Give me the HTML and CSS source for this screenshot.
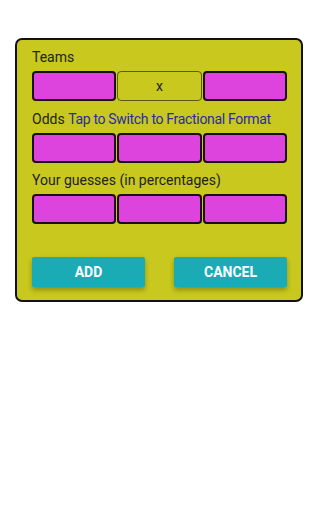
FILE: index.html
```html
<!DOCTYPE html>
<html>
<head>
<meta charset="utf-8">
<link rel="stylesheet" href="styles.css">
</head>
<body>
<div class="card">
  <div class="label">Teams</div>
  <div class="row">
    <div class="box"></div>
    <div class="box plain">x</div>
    <div class="box"></div>
  </div>
  <div class="label">Odds <span class="link">Tap to Switch to Fractional Format</span></div>
  <div class="row">
    <div class="box"></div>
    <div class="box"></div>
    <div class="box"></div>
  </div>
  <div class="label">Your guesses (in percentages)</div>
  <div class="row">
    <div class="box"></div>
    <div class="box"></div>
    <div class="box"></div>
  </div>
  <div class="actions">
    <button class="btn">ADD</button>
    <button class="btn">CANCEL</button>
  </div>
</div>
</body>
</html>
```
FILE: styles.css
```css
html, body {
  margin: 0;
  padding: 0;
  background: #ffffff;
}
body {
  font-family: Roboto, "Liberation Sans", sans-serif;
  color: #222222;
}
.card {
  box-sizing: border-box;
  width: 288px;
  margin: 38px 0 0 15px;
  border: 2px solid #111111;
  border-radius: 7px;
  background: #c8c81e;
  padding: 7px 14px 13px 15px;
}
.label {
  font-size: 14px;
  line-height: 20px;
  height: 20px;
  margin-bottom: 4px;
  white-space: nowrap;
}
.link {
  color: #2a2aa6;
  letter-spacing: -0.32px;
}
.row {
  display: grid;
  grid-template-columns: 1fr 1fr 1fr;
  gap: 1px;
  margin-bottom: 7.5px;
}
.box {
  box-sizing: border-box;
  height: 30px;
  background: #dd44dd;
  border: 2px solid #1a0d14;
  border-radius: 4px;
}
.plain {
  background: #c8c81e;
  border: 1px solid #5a5a10;
  display: flex;
  align-items: center;
  justify-content: center;
  font-size: 14px;
  color: #222;
}
.actions {
  display: flex;
  justify-content: space-between;
  margin-top: 33px;
}
.btn {
  width: 113px;
  height: 30px;
  border: none;
  border-radius: 2px;
  background: #1aabb5;
  color: #ffffff;
  font-family: Roboto, "Liberation Sans", sans-serif;
  font-weight: bold;
  font-size: 14px;
  box-shadow: 0 3px 5px rgba(0,0,0,0.3);
  padding: 0;
}
```
